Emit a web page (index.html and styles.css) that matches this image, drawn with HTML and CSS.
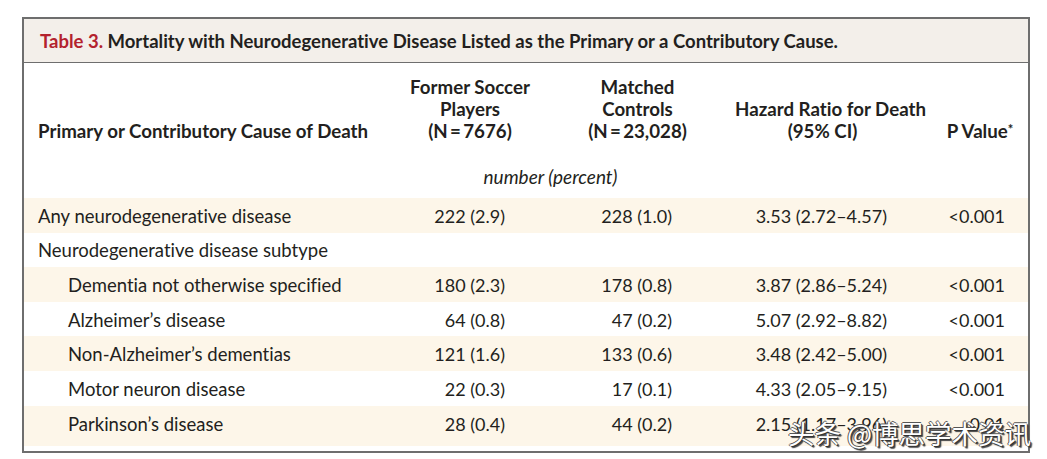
FILE: index.html
```html
<!DOCTYPE html>
<html lang="en">
<head>
<meta charset="utf-8">
<title>Table 3</title>
<link rel="stylesheet" href="styles.css">
</head>
<body>
<div class="page">
  <div class="figure">
    <div class="title-bar"><span class="label">Table 3.</span> Mortality with Neurodegenerative Disease Listed as the Primary or a Contributory Cause.</div>
    <table class="data">
      <colgroup>
        <col class="c-label"><col class="c-a"><col class="c-b"><col class="c-c"><col class="c-d">
      </colgroup>
      <thead>
        <tr class="head">
          <th class="h-label">Primary or Contributory Cause of Death</th>
          <th>Former Soccer<br>Players<br>(N&thinsp;=&thinsp;7676)</th>
          <th>Matched<br>Controls<br>(N&thinsp;=&thinsp;23,028)</th>
          <th>Hazard Ratio for Death<br>(95% CI)</th>
          <th class="h-p">P Value<span class="ast">*</span></th>
        </tr>
        <tr class="spanner">
          <th></th>
          <th colspan="2" class="units">number (percent)</th>
          <th></th><th></th>
        </tr>
      </thead>
      <tbody>
        <tr class="shade"><td class="lbl">Any neurodegenerative disease</td><td class="n1">222 (2.9)</td><td class="n2">228 (1.0)</td><td class="hr">3.53 (2.72–4.57)</td><td class="pv">&lt;0.001</td></tr>
        <tr><td class="lbl">Neurodegenerative disease subtype</td><td class="n1"></td><td class="n2"></td><td class="hr"></td><td class="pv"></td></tr>
        <tr class="shade"><td class="lbl sub">Dementia not otherwise specified</td><td class="n1">180 (2.3)</td><td class="n2">178 (0.8)</td><td class="hr">3.87 (2.86–5.24)</td><td class="pv">&lt;0.001</td></tr>
        <tr><td class="lbl sub">Alzheimer’s disease</td><td class="n1">64 (0.8)</td><td class="n2">47 (0.2)</td><td class="hr">5.07 (2.92–8.82)</td><td class="pv">&lt;0.001</td></tr>
        <tr class="shade"><td class="lbl sub">Non-Alzheimer’s dementias</td><td class="n1">121 (1.6)</td><td class="n2">133 (0.6)</td><td class="hr">3.48 (2.42–5.00)</td><td class="pv">&lt;0.001</td></tr>
        <tr><td class="lbl sub">Motor neuron disease</td><td class="n1">22 (0.3)</td><td class="n2">17 (0.1)</td><td class="hr">4.33 (2.05–9.15)</td><td class="pv">&lt;0.001</td></tr>
        <tr class="shade last"><td class="lbl sub">Parkinson’s disease</td><td class="n1">28 (0.4)</td><td class="n2">44 (0.2)</td><td class="hr">2.15 (1.17–3.96)</td><td class="pv">0.01</td></tr>
      </tbody>
    </table>
    <div class="watermark">头条 @博思学术资讯</div>
  </div>
</div>
</body>
</html>
```
FILE: styles.css
```css
html, body {
  margin: 0;
  padding: 0;
  background: #ffffff;
}
.page {
  padding: 17px 0 0 22px;
  width: 1008px;
}
.figure {
  position: relative;
  border: 2px solid #6e6e6e;
  font-family: "Lato", "Open Sans", sans-serif;
  font-variant-ligatures: none;
  color: #231f20;
  padding-bottom: 5px;
}
.title-bar {
  background: #f3efea;
  border-bottom: 1px solid #6e6e6e;
  height: 41px;
  line-height: 41px;
  padding-top: 2px;
  padding-left: 16px;
  font-size: 18.5px;
  font-weight: 700;
  color: #231f20;
  white-space: nowrap;
}
.title-bar .label {
  color: #b3222e;
}
.data {
  width: 100%;
  border-collapse: collapse;
  table-layout: fixed;
}
.c-label { width: 376px; }
.c-a { width: 140px; }
.c-b { width: 195px; }
.c-c { width: 175px; }
.c-d { width: 118px; }
.head th {
  font-size: 18.7px;
  font-weight: 700;
  line-height: 22px;
  text-align: center;
  vertical-align: bottom;
  padding: 13px 0 0 0;
  white-space: nowrap;
}
.head th.h-label {
  text-align: left;
  padding-left: 14px;
}
.head th.h-p {
  padding-left: 22px;
}
.ast {
  font-size: 13px;
  vertical-align: 4px;
}
.spanner th {
  padding: 24px 0 10px 0;
  line-height: 22px;
}
.spanner th.units {
  font-size: 19px;
  font-style: italic;
  font-weight: 400;
  text-align: center;
  padding-right: 34px;
}
tbody tr {
  height: 34.6px;
}
tbody td {
  padding: 1px 0 0 0;
  font-size: 18.5px;
  line-height: 20px;
  vertical-align: middle;
  white-space: nowrap;
}
tbody tr.shade td {
  background: #fdf6e9;
}
tbody tr.last {
  height: 40px;
}
tbody tr.last td {
  padding-bottom: 5px;
}
td.lbl { padding-left: 14px; }
td.lbl.sub { padding-left: 44px; }
td.n1, td.n2, td.hr, td.pv {
  text-align: right;
  font-size: 18px;
}
td.n1 { padding-right: 35px; }
td.n2 { padding-right: 63px; }
td.hr { padding-right: 23px; }
td.pv { padding-right: 23px; }
.watermark {
  position: absolute;
  right: -3px;
  bottom: 3px;
  font-family: "Noto Sans CJK SC", sans-serif;
  font-size: 26.5px;
  line-height: 30px;
  color: #ffffff;
  text-shadow: 1px 1px 0 #333, -1px 0 0 #555, 0 -1px 0 #555, 2px 2px 1px #444;
  white-space: nowrap;
}
```
